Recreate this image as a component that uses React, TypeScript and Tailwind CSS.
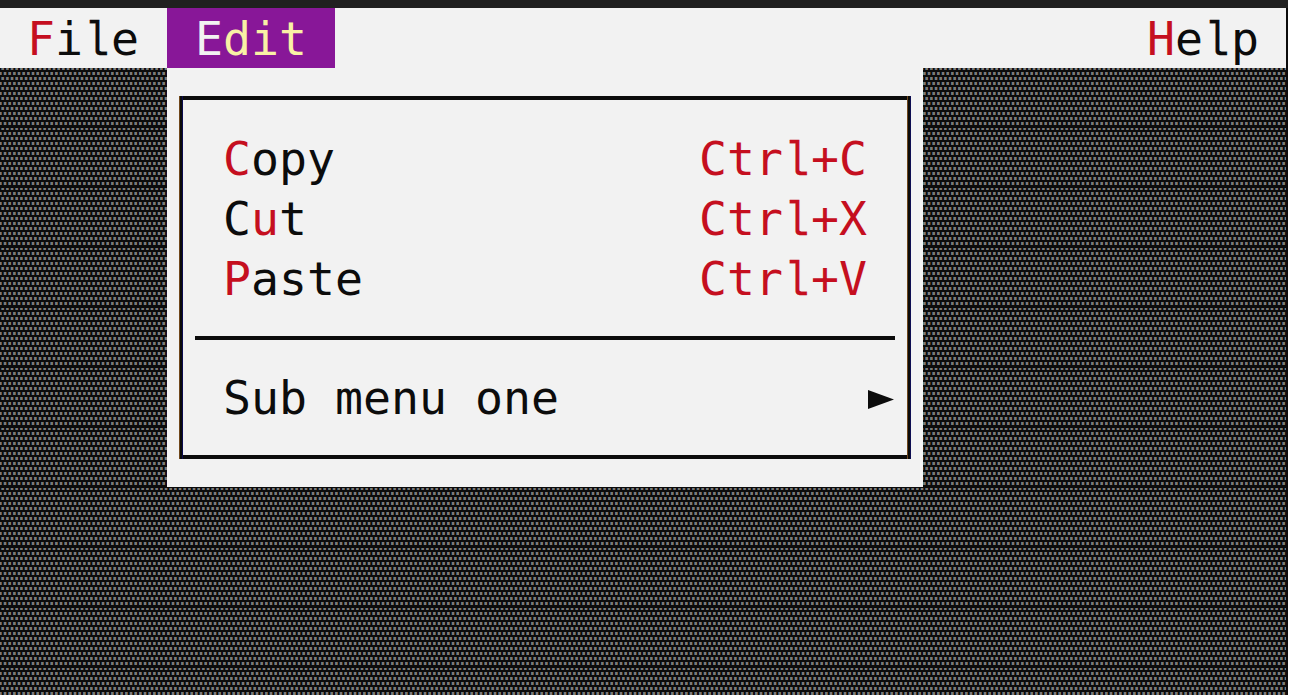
import type { ReactNode } from "react";

// Three dots per 14px tile; each dot period is 14 subpixels wide.
const FOREGROUND = 122;
const BACKGROUND = 12;
const lit = (s: number, shifted: boolean) => (s - (shifted ? 7 : 0) + 28) % 14 < 8;

function shadeColor(x: number, shifted: boolean) {
  const channels = [0, 1, 2].map((c) => {
    const s = x * 3 + c;
    const coverage = [s - 1, s, s + 1].filter((n) => lit(n, shifted)).length / 3;
    return Math.round(BACKGROUND + (FOREGROUND - BACKGROUND) * coverage);
  });
  return `rgb(${channels.join(",")})`;
}

const SHADE_ROWS = [0, 4, 9, 14, 19, 24, 29, 34, 39, 44, 49, 54];
const COLUMNS = Array.from({ length: 14 }, (_, x) => x);

function Shade() {
  return (
    <svg className="absolute inset-0 h-full w-[1286px]" aria-hidden="true" shapeRendering="crispEdges">
      <defs>
        <pattern id="shade" x="-1" y="0" width="14" height="60" patternUnits="userSpaceOnUse">
          {SHADE_ROWS.map((y, i) =>
            COLUMNS.map((x) => (
              <rect key={`${x}-${y}`} x={x} y={y} width="1" height={i === 0 ? 2 : 3} fill={shadeColor(x, i % 2 === 0)} />
            )),
          )}
        </pattern>
      </defs>
      <rect width="100%" height="100%" fill="url(#shade)" />
    </svg>
  );
}

function Text({ children, className = "pt-px" }: { children: ReactNode; className?: string }) {
  return <span className={`block whitespace-pre leading-[60px] ${className}`}>{children}</span>;
}

const Hot = ({ children }: { children: ReactNode }) => <span className="text-[#c50f1f]">{children}</span>;

const Ell = () => (
  <span className="inline-block origin-[48%_77%] scale-x-[0.88] scale-y-[1.04] font-['Liberation_Mono',monospace] text-[46.66px] leading-none [-webkit-text-stroke:0.3px_currentColor]">
    l
  </span>
);

function Item({ label, shortcut }: { label: ReactNode; shortcut: string }) {
  return (
    <div className="flex h-[60px] justify-between px-[40px]">
      <Text>{label}</Text>
      <Text className="pt-px text-[#c50f1f]">
        Ctr<Ell />+{shortcut}
      </Text>
    </div>
  );
}

function SideRule() {
  return (
    <div className="flex w-1 shrink-0">
      <div className="w-px bg-[#70481c]" />
      <div className="w-0.5 bg-[#0c0c0c]" />
      <div className="w-px bg-[#0c0c50]" />
    </div>
  );
}

export default function App() {
  return (
    <div className="flex h-[695px] w-[1289px] flex-col overflow-hidden bg-white font-['DejaVu_Sans_Mono',monospace] text-[46.51px] text-[#0c0c0c]">
      <div className="h-2 w-[1288px] shrink-0 bg-[#202020]" />
      <div className="flex w-[1288px] grow flex-col bg-[#0c0c0c]">
        <nav className="flex h-[60px] w-[1286px] shrink-0 bg-[#f2f2f2]">
          <div className="w-[167px] pl-[27px]">
            <Text><Hot>F</Hot>i<Ell />e</Text>
          </div>
          <div className="w-[168px] bg-[#881798] pl-[28px] text-[#f9f1a5]">
            <Text><span className="text-[#f2f2f2]">E</span>dit</Text>
          </div>
          <div className="ml-auto pr-[27px]">
            <Text><Hot>H</Hot>e<Ell />p</Text>
          </div>
        </nav>
        <main className="relative grow pl-[167px]">
          <Shade />
          <div className="relative h-[419px] w-[756px] bg-[#f2f2f2] px-3 pt-7">
            <div className="flex h-[363px] w-[732px]">
              <SideRule />
              <div className="flex grow flex-col border-y-4 border-[#0c0c0c] pt-7">
                <Item label={<><Hot>C</Hot>opy</>} shortcut="C" />
                <Item label={<>C<Hot>u</Hot>t</>} shortcut="X" />
                <Item label={<><Hot>P</Hot>aste</>} shortcut="V" />
                <div className="my-7 ml-3 h-1 w-[700px] shrink-0 bg-[#0c0c0c]" />
                <div className="flex h-[60px] justify-between pr-[13px] pl-[40px]">
                  <Text className="pt-0">Sub menu one</Text>
                  <svg className="mt-[22px] h-[19px] w-[26px]" viewBox="0 0 26 19" aria-hidden="true">
                    <path d="M0 0L26 9.5L0 19Z" fill="#0c0c0c" />
                  </svg>
                </div>
              </div>
              <SideRule />
            </div>
          </div>
        </main>
      </div>
    </div>
  );
}
